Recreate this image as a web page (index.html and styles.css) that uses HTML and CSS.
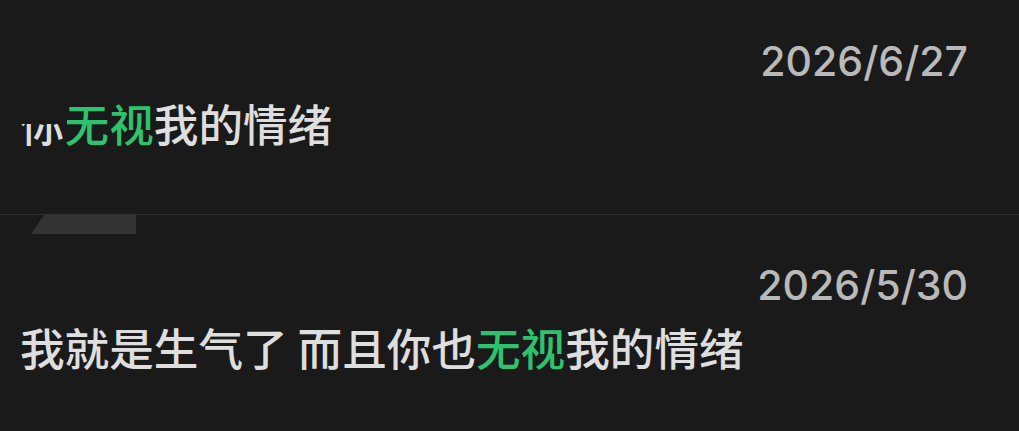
FILE: index.html
```html
<!DOCTYPE html>
<html lang="zh-CN">
<head>
<meta charset="utf-8">
<title>消息</title>
<link rel="stylesheet" href="styles.css">
</head>
<body>
<div class="list">
  <div class="item item-first">
    <div class="date">2026/6/27</div>
    <div class="text"><span class="clipped">你</span><span class="hl">无视</span>我的情绪</div>
  </div>
  <div class="item">
    <div class="tab-tail"></div>
    <div class="date">2026/5/30</div>
    <div class="text">我就是生气了 而且你也<span class="hl">无视</span>我的情绪</div>
  </div>
</div>
</body>
</html>
```
FILE: styles.css
```css
html, body {
  margin: 0;
  padding: 0;
  background: #1a1a1a;
  width: 1019px;
  height: 431px;
  overflow: hidden;
}
.list {
  display: flex;
  flex-direction: column;
}
.item {
  position: relative;
  display: flex;
  flex-direction: column;
  padding: 46px 51px 68px 20px;
  border-bottom: 1px solid #2f2f2f;
}
.item-first {
  margin-top: -9px;
}
.date {
  align-self: flex-end;
  font-family: Inter, "Liberation Sans", sans-serif;
  font-weight: 500;
  font-size: 41px;
  line-height: 48px;
  color: #b9b9b9;
}
.text {
  margin-top: 14px;
  font-family: "Noto Sans CJK SC", "Noto Sans", sans-serif;
  font-weight: 500;
  font-size: 44.6px;
  line-height: 47px;
  color: #dedede;
  white-space: nowrap;
}
.hl {
  color: #2ec26e;
}
.clipped {
  display: inline-block;
  position: relative;
}
.clipped::after {
  content: "";
  position: absolute;
  left: -4px;
  right: -2px;
  top: 0;
  height: 25px;
  background: #1a1a1a;
}
.tab-tail {
  position: absolute;
  left: 31px;
  top: 0;
  width: 105px;
  height: 19px;
  background: #333333;
  clip-path: polygon(13px 0, 100% 0, 100% 100%, 0 100%);
}
```
